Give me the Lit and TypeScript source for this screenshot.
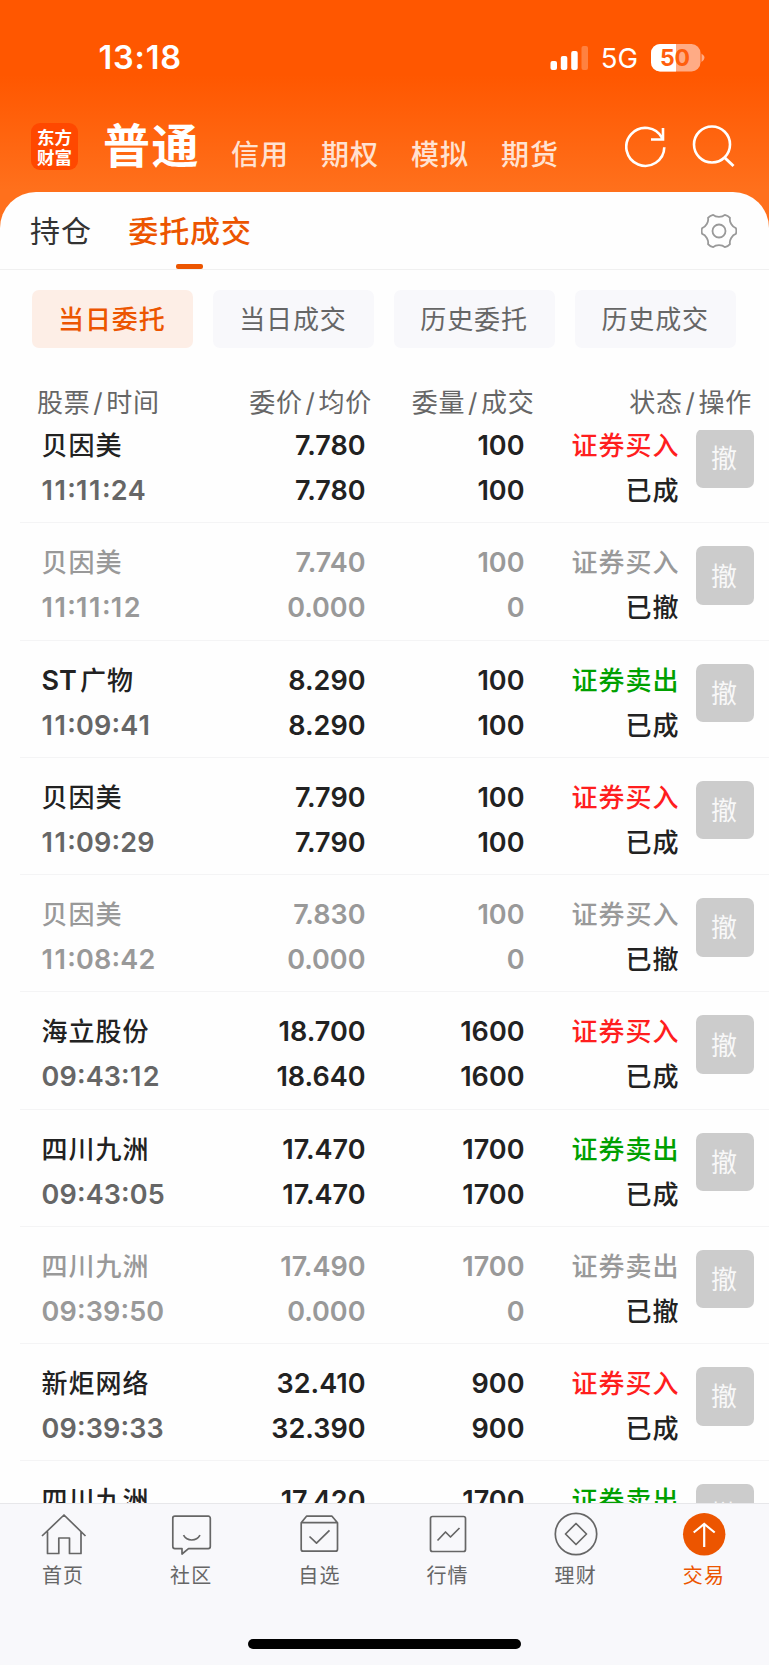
import { LitElement, html, css, svg } from "lit";
import { customElement, property } from "lit/decorators.js";
import { classMap } from "lit/directives/class-map.js";

interface Order {
  name: string;
  time: string;
  price: string;
  avg: string;
  qty: string;
  filled: string;
  side: "buy" | "sell";
  cancelled?: boolean;
}

const ORDERS: Order[] = [
  { name: "贝因美", time: "11:11:24", price: "7.780", avg: "7.780", qty: "100", filled: "100", side: "buy" },
  { name: "贝因美", time: "11:11:12", price: "7.740", avg: "0.000", qty: "100", filled: "0", side: "buy", cancelled: true },
  { name: "ST广物", time: "11:09:41", price: "8.290", avg: "8.290", qty: "100", filled: "100", side: "sell" },
  { name: "贝因美", time: "11:09:29", price: "7.790", avg: "7.790", qty: "100", filled: "100", side: "buy" },
  { name: "贝因美", time: "11:08:42", price: "7.830", avg: "0.000", qty: "100", filled: "0", side: "buy", cancelled: true },
  { name: "海立股份", time: "09:43:12", price: "18.700", avg: "18.640", qty: "1600", filled: "1600", side: "buy" },
  { name: "四川九洲", time: "09:43:05", price: "17.470", avg: "17.470", qty: "1700", filled: "1700", side: "sell" },
  { name: "四川九洲", time: "09:39:50", price: "17.490", avg: "0.000", qty: "1700", filled: "0", side: "sell", cancelled: true },
  { name: "新炬网络", time: "09:39:33", price: "32.410", avg: "32.390", qty: "900", filled: "900", side: "buy" },
  { name: "四川九洲", time: "09:39:12", price: "17.420", avg: "17.420", qty: "1700", filled: "1700", side: "sell" },
];

const NAV = [
  { label: "首页", icon: svg`<path d="M3 23 25 2 46.500 23M8.500 18.500V40.500H19.800V25H30.500V40.500H42V18.500"/>` },
  { label: "社区", icon: svg`<path d="M7.300 3.200H41.300a2 2 0 0 1 2 2V33.600a2 2 0 0 1-2 2H21.500L15 41V35.600H7.800a2 2 0 0 1-2-2V5.200a2 2 0 0 1 2-2M16.500 22.200a9.500 9.500 0 0 0 16.500 0"/>` },
  { label: "自选", icon: svg`<path d="M11.500 3.200H37L42.500 9.700V36.200a2 2 0 0 1-2 2H8.200a2 2 0 0 1-2-2V9.700ZM6.200 9.700H42.500M14.500 23.500 21.500 30.200 34.500 17.300"/>` },
  { label: "行情", icon: svg`<rect x="6.500" y="3.500" width="35" height="35" rx="2"/><path d="M13.500 27.500 21.500 19 26.500 24 35.500 15"/>` },
  { label: "理财", icon: svg`<circle cx="24" cy="21" r="20.700"/><path d="M24 10.500 34.500 21 24 31.500 13.500 21Z"/>` },
  { label: "交易", active: true, icon: svg`<circle class="disc" cx="24.200" cy="21.300" r="21.200"/><path class="arrow" d="M24.200 34V11.500M13.700 19.500 24.200 11 34.700 19.500"/>` },
];

@customElement("status-bar")
export class StatusBar extends LitElement {
  static styles = css`
    :host { display: flex; height: 114px; box-sizing: border-box; padding: 38px 64px 0 98.500px; color: #fff; align-items: flex-start; font-family: Inter, sans-serif; }
    .time { font-size: 32.500px; font-weight: 600; line-height: 40px; letter-spacing: .800px; }
    .right { margin-left: auto; display: flex; align-items: center; height: 39px; }
    .net { font-size: 27.500px; line-height: 39px; margin: 1px 13px 0 13px; }
    .level { font: 700 23px Inter, sans-serif; fill: #ff5e0d; }
    svg { display: block; }
  `;
  render() {
    return html`
      <span class="time">13:18</span>
      <div class="right">
        <svg width="38" height="26" fill="#fff">
          <rect x="0.500" y="16" width="6.500" height="9" rx="2" /><rect x="10.800" y="11" width="6.500" height="14" rx="2" />
          <rect x="21.200" y="6" width="6.500" height="19" rx="2" /><rect x="31.500" y="1" width="6.500" height="24" rx="2" opacity=".25" />
        </svg>
        <span class="net">5G</span>
        <svg width="54" height="28">
          <defs><clipPath id="b"><rect width="49.500" height="27.500" rx="9" /></clipPath></defs>
          <g clip-path="url(#b)"><rect width="50" height="28" fill="#ffab85" /><rect width="25" height="28" fill="#fff" /></g>
          <path d="M50.500 9.500q6 4.300 0 8.600z" fill="#ffab85" />
          <text class="level" x="24" y="22" text-anchor="middle">50</text>
        </svg>
      </div>
    `;
  }
}

@customElement("account-bar")
export class AccountBar extends LitElement {
  static styles = css`
    :host { display: flex; height: 78px; box-sizing: border-box; padding-left: 31px; color: #fff; font-family: "Noto Sans CJK SC", sans-serif; }
    .logo { width: 47px; height: 47px; margin-top: 9px; border-radius: 9px; background: #ff4800; display: flex; flex-direction: column; align-items: center; justify-content: center; font: 700 17.500px/19.500px "Noto Sans CJK SC", sans-serif; }
    .current { margin: 1px 0 0 25px; font-size: 47px; font-weight: 700; line-height: 56px; letter-spacing: 1.500px; }
    .tabs { display: flex; gap: 32px; margin: 20px 0 0 31px; }
    .tab { font-size: 28px; font-weight: 500; line-height: 38px; letter-spacing: 1px; color: #ffe2d2; }
    svg { margin-left: auto; margin-right: 30px; margin-top: 8px; }
  `;
  render() {
    return html`
      <div class="logo"><span>东方</span><span>财富</span></div>
      <span class="current">普通</span>
      <div class="tabs">${["信用", "期权", "模拟", "期货"].map((t) => html`<span class="tab">${t}</span>`)}</div>
      <svg width="114" height="50" fill="none" stroke="#fff" stroke-width="2.600">
        <path d="M37.200 16.200A19 19 0 1 0 39.300 25.300M38 6V17.500H26" />
        <circle cx="87" cy="22.500" r="18" /><path d="M99.500 35.500 108.500 44" stroke-width="3" />
      </svg>
    `;
  }
}

@customElement("order-row")
export class OrderRow extends LitElement {
  @property({ attribute: false }) order!: Order;
  static styles = css`
    :host { display: grid; grid-template-columns: 181px 143px 159px 154px 1fr; height: 117.250px; box-sizing: border-box; margin-left: 20px; padding-left: 21.500px; border-bottom: 1.500px solid #f4f4f5; flex: none; color: #222; font: 600 27px/45px Inter, "Noto Sans CJK SC", sans-serif; }
    .col { display: flex; flex-direction: column; padding-top: 17px; }
    .num { align-items: flex-end; }
    .cjk { font-weight: 500; font-size: 26px; letter-spacing: 1px; }
    .latin { font-weight: 600; font-size: 27px; letter-spacing: 0; padding-right: 3px; }
    .side { align-items: flex-end; margin-right: -1px; }
    .time { color: #666; font-weight: 600; letter-spacing: .150px; font-kerning: none; font-feature-settings: "case"; }
    .one { letter-spacing: 1.500px; }
    .buy { color: #ff1e1e; }
    .sell { color: #00a000; }
    .off, .off .time { color: #999; }
    .cancel { margin: 23px 0 0 17px; width: 58px; height: 58.500px; border: 0; padding: 0 1px 2px 0; box-sizing: border-box; border-radius: 7px; background: #ccc; color: #f8f8f8; font: 400 26px/56px "Noto Sans CJK SC", sans-serif; text-align: center; }
  `;
  render() {
    const o = this.order;
    const off = !!o.cancelled;
    const st = o.name.startsWith("ST");
    return html`
      <div class=${classMap({ col: true, off })}>
        <span class="cjk">${st ? html`<span class="latin">ST</span>${o.name.slice(2)}` : o.name}</span><span class="time">${o.time.split(/(1+)/).map((part) => (part.startsWith("1") ? html`<span class="one">${part}</span>` : part))}</span>
      </div>
      <div class=${classMap({ col: true, num: true, off })}><span>${o.price}</span><span>${o.avg}</span></div>
      <div class=${classMap({ col: true, num: true, off })}><span>${o.qty}</span><span>${o.filled}</span></div>
      <div class="col side">
        <span class=${classMap({ cjk: true, [o.side]: !off, off })}>${o.side === "buy" ? "证券买入" : "证券卖出"}</span>
        <span class="cjk">${off ? "已撤" : "已成"}</span>
      </div>
      <button class="cancel">撤</button>
    `;
  }
}

@customElement("tab-bar")
export class TabBar extends LitElement {
  static styles = css`
    :host { display: flex; flex-direction: column; height: 162px; box-sizing: border-box; background: #f8f8fb; border-top: 1px solid #e7e7ea; flex: none; }
    .items { display: grid; grid-template-columns: repeat(6, 1fr); height: 135px; margin-right: 1px; margin-left: -1px; }
    .item { display: flex; flex-direction: column; align-items: center; padding-top: 8.700px; color: #666; font: 400 20px/30px "Noto Sans CJK SC", sans-serif; letter-spacing: 1.200px; }
    .item svg { fill: none; stroke: #666; stroke-width: 1.700; stroke-linejoin: round; overflow: visible; }
    .label { margin-top: 3px; }
    .active { color: #ec5500; }
    .item .disc { fill: #ec5500; stroke: none; }
    .item .arrow { stroke: #fff; stroke-width: 2.200; stroke-linejoin: miter; }
    .home { width: 273px; height: 10px; border-radius: 5px; background: #000; align-self: center; }
  `;
  render() {
    return html`
      <div class="items">
        ${NAV.map((n) => html`<div class=${classMap({ item: true, active: !!n.active })}><svg width="48" height="44">${n.icon}</svg><span class="label">${n.label}</span></div>`)}
      </div>
      <div class="home"></div>
    `;
  }
}

/* Six-lobed cog outline centred on (18, 18). */
const gearPath = (() => {
  const p = (r: number, deg: number) => {
    const a = (deg * Math.PI) / 180;
    return `${(18 + r * Math.cos(a)).toFixed(2)} ${(18 + r * Math.sin(a)).toFixed(2)}`;
  };
  let d = `M${p(17.1, -10)}`;
  for (let i = 0; i < 6; i++) {
    const c = i * 60;
    d += `Q${p(17.9, c)} ${p(17.1, c + 10)}`;
    d += `C${p(13.8, c + 17)} ${p(13.8, c + 43)} ${p(17.1, c + 50)}`;
  }
  return d + "Z";
})();

@customElement("app-root")
export class AppRoot extends LitElement {
  static styles = css`
    :host { display: flex; flex-direction: column; width: 769px; height: 1665px; overflow: hidden; background: linear-gradient(#ff5700 0, #ff5700 75px, #ff701c 190px, #ff701c 100%); font-family: Inter, "Noto Sans CJK SC", sans-serif; }
    .sheet { flex: 1; min-height: 0; display: flex; flex-direction: column; background: #fefefe; border-radius: 36px 36px 0 0; }
    .tabs { display: flex; height: 78px; box-sizing: border-box; border-bottom: 1px solid #f0f0f0; padding: 0 32px 0 30px; flex: none; }
    .tab { font-size: 30px; line-height: 44px; letter-spacing: .900px; padding-top: 17px; height: 77px; box-sizing: border-box; color: #333; display: flex; flex-direction: column; justify-content: space-between; align-items: center; }
    .tab.on { margin-left: 36.500px; color: #ec5500; font-weight: 500; }
    .mark { width: 27px; height: 5px; border-radius: 2px; background: #ec5500; margin-left: -1px; }
    .gear { margin: 21px 0 0 auto; }
    .chips { display: grid; grid-template-columns: repeat(4, 1fr); gap: 20.500px; padding: 19.500px 33px 0 32px; flex: none; }
    .chip { height: 58.500px; border-radius: 7px; background: #f8f8fb; color: #666; font-size: 26px; line-height: 59px; letter-spacing: .900px; text-align: center; box-sizing: border-box; padding-right: 1px; }
    .chip.on { background: #fdeee6; color: #ec5500; font-weight: 500; }
    .heads { display: grid; grid-template-columns: 172px 163px 162.500px 1fr; padding: 36px 17px 0 37px; height: 82px; box-sizing: border-box; font-size: 26px; line-height: 38px; color: #666; letter-spacing: .800px; flex: none; text-align: right; }
    .heads span:first-child { text-align: left; }
    .slash { padding: 0 2.700px; }
    .list { flex: 1; min-height: 0; overflow: hidden; display: flex; flex-direction: column; }
    .list order-row:first-child { margin-top: -24px; }
  `;
  render() {
    return html`
      <status-bar></status-bar>
      <account-bar></account-bar>
      <div class="sheet">
        <div class="tabs">
          <span class="tab">持仓</span>
          <span class="tab on">委托成交<span class="mark"></span></span>
          <svg class="gear" width="36" height="36" fill="none" stroke="#999" stroke-width="1.800" stroke-linejoin="round"><path d=${gearPath} /><circle cx="18" cy="18" r="6.500" /></svg>
        </div>
        <div class="chips">
          ${["当日委托", "当日成交", "历史委托", "历史成交"].map((c, i) => html`<div class=${classMap({ chip: true, on: i === 0 })}>${c}</div>`)}
        </div>
        <div class="heads">
          ${["股票/时间", "委价/均价", "委量/成交", "状态/操作"].map((h) => {
            const [a, b] = h.split("/");
            return html`<span>${a}<span class="slash">/</span>${b}</span>`;
          })}
        </div>
        <div class="list">${ORDERS.map((o) => html`<order-row .order=${o}></order-row>`)}</div>
      </div>
      <tab-bar></tab-bar>
    `;
  }
}
